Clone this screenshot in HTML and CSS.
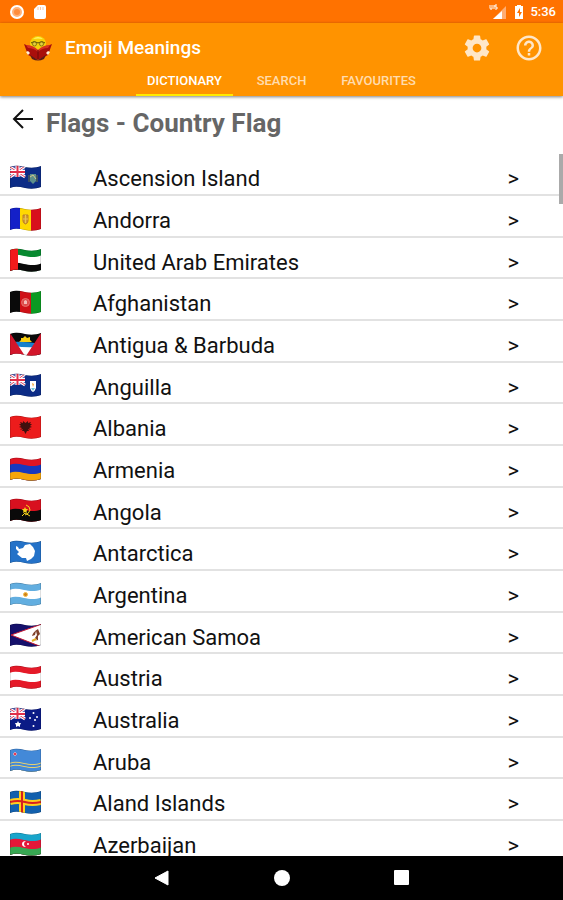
FILE: index.html
```html
<!DOCTYPE html>
<html lang="en">
<head>
<meta charset="utf-8">
<meta name="viewport" content="width=device-width, initial-scale=1">
<title>Emoji Meanings</title>
<link rel="stylesheet" href="styles.css">
</head>
<body>
<svg class="defs" aria-hidden="true">
  <defs>
    <path id="wave" d="M-1 2C4 0 9 1 14 2S26 4 32 1V40H-1Z"/>
    <clipPath id="cloth"><path d="M0 2C5 0 10 1 15 2S26 3 31 1V22C26 24 20 24 15 23S5 21 0 23Z"/></clipPath>
    <g id="jack">
      <path d="M0 1H15V12H0Z" fill="#5a5fae"/>
      <path d="M0 2L15 12M15 1L0 12" stroke="#fff" stroke-width="3"/>
      <path d="M0 2L15 12M15 1L0 12" stroke="#e0405a" stroke-width="1"/>
      <path d="M7.500 0V12M0 7H15" stroke="#fff" stroke-width="4"/>
      <path d="M7.500 0V12M0 7H15" stroke="#e0304a" stroke-width="2"/>
    </g>
    <path id="fold" d="M0 2C5 0 10 1 15 2S26 3 31 1V22C26 24 20 24 15 23S5 21 0 23Z" fill="none" stroke="#000" stroke-opacity=".25"/>
  </defs>
</svg>
<div class="app">
  <div class="status">
    <svg class="status-left" viewBox="0 0 40 16" aria-hidden="true">
      <circle cx="8" cy="8" r="6" fill="#ffb27a" stroke="#fff" stroke-width="2"/>
      <circle cx="8" cy="8" r="3" fill="#ff8d3c"/>
      <path d="M29 1H35Q37 1 37 3V13Q37 15 35 15H27Q25 15 25 13V5Z" fill="#fff"/>
      <path d="M29 3V6M31.500 3V6M34 3V6" stroke="#ffc79e"/>
    </svg>
    <div class="status-right">
      <svg class="signal" viewBox="0 0 18 16" aria-hidden="true">
        <path d="M17 2V15H4Z" fill="#ffad73"/>
        <path d="M13 7V15H4Z" fill="#fff"/>
        <path d="M1 1V4Q1 6 3 5V1M5 1V5M8 1H6V3H8V5H6" fill="none" stroke="#fff"/>
      </svg>
      <svg class="battery" viewBox="0 0 10 16" aria-hidden="true">
        <path d="M3 1H7V2H9V15H1V2H3Z" fill="#fff"/>
        <path d="M6 4L3 9H5V13L8 8H6Z" fill="#ff7200"/>
      </svg>
      <span class="time">5:36</span>
    </div>
  </div>
  <header class="appbar">
    <div class="toolbar">
      <svg class="logo" viewBox="0 0 30 26" aria-hidden="true">
        <circle cx="15" cy="9" r="8" fill="#f5d20a"/>
        <path d="M10 4Q15 0 20 4Q15 3 10 4Z" fill="#fff36b"/>
        <path d="M8 8Q11 5 15 8Q19 5 22 8" fill="none" stroke="#54480a"/>
        <circle cx="11.500" cy="9" r="2" fill="#e3cf3c" stroke="#8a780f"/>
        <circle cx="18.500" cy="9" r="2" fill="#e3cf3c" stroke="#8a780f"/>
        <path d="M1 9L15 15L29 9L25 20L15 25L5 20Z" fill="#a90f0c"/>
        <path d="M3 10Q10 10 15 15Q20 10 27 10L25 13Q19 13 15 17Q11 13 5 13Z" fill="#d8301f"/>
        <path d="M7 20L15 25L23 20L21 24Q15 27 9 24Z" fill="#5a1a18"/>
        <path d="M15 15V24" stroke="#6c0808"/>
        <path d="M3 17L5 16L7 18L5 20Z" fill="#fff0d8"/>
        <path d="M27 17L25 16L23 18L25 20Z" fill="#fff0d8"/>
      </svg>
      <h1 class="app-title">Emoji Meanings</h1>
      <div class="actions">
        <button class="icon-button" aria-label="Settings">
          <svg viewBox="0 0 24 24"><path fill="currentColor" d="M19.430 12.980c.04-.32.07-.64.07-.98s-.03-.66-.07-.98l2.110-1.650c.19-.15.24-.42.12-.64l-2-3.460c-.12-.22-.39-.3-.61-.22l-2.490 1c-.52-.4-1.080-.73-1.690-.98l-.38-2.650C14.460 2.180 14.250 2 14 2h-4c-.25 0-.46.18-.49.42l-.38 2.650c-.61.25-1.170.59-1.690.98l-2.490-1c-.23-.09-.49 0-.61.22l-2 3.460c-.13.22-.07.49.12.64l2.110 1.650c-.04.32-.07.65-.07.98s.03.66.07.98l-2.110 1.650c-.19.15-.24.42-.12.64l2 3.460c.12.22.39.3.61.22l2.490-1c.52.4 1.080.73 1.690.98l.38 2.650c.03.24.24.42.49.42h4c.25 0 .46-.18.49-.42l.38-2.650c.61-.25 1.170-.59 1.690-.98l2.490 1c.23.09.49 0 .61-.22l2-3.460c.12-.22.07-.49-.12-.64l-2.110-1.650zM12 15.500c-1.930 0-3.500-1.570-3.500-3.500s1.570-3.500 3.500-3.500 3.500 1.570 3.500 3.500-1.570 3.500-3.500 3.500z"/></svg>
        </button>
        <button class="icon-button" aria-label="Help">
          <svg viewBox="0 0 24 24"><path fill="currentColor" d="M11 18h2v-2h-2v2zm1-16C6.480 2 2 6.480 2 12s4.480 10 10 10 10-4.480 10-10S17.520 2 12 2zm0 18c-4.410 0-8-3.590-8-8s3.590-8 8-8 8 3.590 8 8-3.590 8-8 8zm0-14c-2.210 0-4 1.790-4 4h2c0-1.100.9-2 2-2s2 .9 2 2c0 2-3 1.750-3 5h2c0-2.250 3-2.500 3-5 0-2.210-1.790-4-4-4z"/></svg>
        </button>
      </div>
    </div>
    <nav class="tabs">
      <a class="tab active" href="#dictionary">DICTIONARY</a>
      <a class="tab" href="#search">SEARCH</a>
      <a class="tab" href="#favourites">FAVOURITES</a>
    </nav>
  </header>
  <main class="content">
    <div class="heading">
      <button class="back" aria-label="Back">
        <svg viewBox="0 0 22 22"><path d="M21 11H2M11 2L2 11L11 20" fill="none" stroke="#111" stroke-width="2"/></svg>
      </button>
      <h2 class="heading-title">Flags - Country Flag</h2>
    </div>
    <div class="list-area">
      <ul class="list">
        <li><a class="row" href="#ac"><svg class="flag" viewBox="0 0 31 25" aria-hidden="true"><g clip-path="url(#cloth)"><path fill="#0c2c86" d="M0 0H31V25H0Z"/><use href="#jack"/><path d="M20 9H26V16L23 19L20 16Z" fill="#5d8f8b"/><path d="M20 12L23 10L26 14" stroke="#d9c88a" fill="none"/><path d="M19 10V17M27 10V17" stroke="#6b7440"/><use href="#fold"/></g></svg><span class="name">Ascension Island</span><span class="go">&gt;</span></a></li>
        <li><a class="row" href="#ad"><svg class="flag" viewBox="0 0 31 25" aria-hidden="true"><g clip-path="url(#cloth)"><path fill="#1420c8" d="M0 0H10V25H0Z"/><path fill="#ffd800" d="M10 0H21V25H10Z"/><path fill="#d8101c" d="M21 0H31V25H21Z"/><path d="M13 8H18V14Q18 16 15.500 17Q13 16 13 14Z" fill="#d69a2d" stroke="#b97c2a"/><path d="M15.500 8V16M13 12H18" stroke="#e8c257"/><use href="#fold"/></g></svg><span class="name">Andorra</span><span class="go">&gt;</span></a></li>
        <li><a class="row" href="#ae"><svg class="flag" viewBox="0 0 31 25" aria-hidden="true"><g clip-path="url(#cloth)"><use href="#wave" y="-2" fill="#078930"/><use href="#wave" y="6" fill="#fff"/><use href="#wave" y="14" fill="#0a0a0a"/><path fill="#f21b1b" d="M0 0H8V25H0Z"/><use href="#fold"/></g></svg><span class="name">United Arab Emirates</span><span class="go">&gt;</span></a></li>
        <li><a class="row" href="#af"><svg class="flag" viewBox="0 0 31 25" aria-hidden="true"><g clip-path="url(#cloth)"><path fill="#0a0a0a" d="M0 0H10V25H0Z"/><path fill="#cf1016" d="M10 0H21V25H10Z"/><path fill="#0b9a22" d="M21 0H31V25H21Z"/><circle cx="15.500" cy="12.500" r="4" fill="#dd4c4b" stroke="#e8706b"/><path d="M14 14V11L15.500 10L17 11V14Z" fill="#f5bcb8"/><use href="#fold"/></g></svg><span class="name">Afghanistan</span><span class="go">&gt;</span></a></li>
        <li><a class="row" href="#ag"><svg class="flag" viewBox="0 0 31 25" aria-hidden="true"><g clip-path="url(#cloth)"><path fill="#0a0a0a" d="M0 0H31V25H0Z"/><path d="M9 10L11 8L11 6L13 6L15 4L17 6L20 5L20 8L22 10Z" fill="#f9cf12"/><path fill="#1681cd" d="M0 10Q15 9 31 12V17H0Z"/><path fill="#fff" d="M4 14Q15 16 28 15V25H4Z"/><path fill="#d3162b" d="M0 1L15 24H0ZM31 1L16 24H31Z"/><use href="#fold"/></g></svg><span class="name">Antigua &amp; Barbuda</span><span class="go">&gt;</span></a></li>
        <li><a class="row" href="#ai"><svg class="flag" viewBox="0 0 31 25" aria-hidden="true"><g clip-path="url(#cloth)"><path fill="#0c2c86" d="M0 0H31V25H0Z"/><use href="#jack"/><path d="M20 8H26V15Q25 18 23 19Q21 18 20 15Z" fill="#fff"/><path d="M22 10L24 11L23 14Z" fill="#f0a032"/><path d="M21 15H25L23 18Z" fill="#6ec4dc"/><use href="#fold"/></g></svg><span class="name">Anguilla</span><span class="go">&gt;</span></a></li>
        <li><a class="row" href="#al"><svg class="flag" viewBox="0 0 31 25" aria-hidden="true"><g clip-path="url(#cloth)"><path fill="#ec1c1c" d="M0 0H31V25H0Z"/><path d="M15.500 8L13 6L13 8L10 7L11 9L9 9L11 11L9 12L12 13L10 15L13 14L12 16L14 16L15.500 19L17 16L19 16L18 14L21 15L19 13L22 12L20 11L22 9L20 9L21 7L18 8L18 6Z" fill="#40100e"/><use href="#fold"/></g></svg><span class="name">Albania</span><span class="go">&gt;</span></a></li>
        <li><a class="row" href="#am"><svg class="flag" viewBox="0 0 31 25" aria-hidden="true"><g clip-path="url(#cloth)"><use href="#wave" y="-2" fill="#e01523"/><use href="#wave" y="6" fill="#1738bd"/><use href="#wave" y="14" fill="#f5a50a"/><use href="#fold"/></g></svg><span class="name">Armenia</span><span class="go">&gt;</span></a></li>
        <li><a class="row" href="#ao"><svg class="flag" viewBox="0 0 31 25" aria-hidden="true"><g clip-path="url(#cloth)"><use href="#wave" y="-2" fill="#d8101f"/><use href="#wave" y="10" fill="#0a0a0a"/><path d="M16 7Q20 8 20 12Q19 16 15 17M12 18L15 15L20 18" fill="none" stroke="#f7d21a" stroke-width="1"/><path d="M15 9L16 11L18 11L16.500 13L17 15L15 14L13 15L13.500 13L12 11L14 11Z" fill="#f7d21a"/><use href="#fold"/></g></svg><span class="name">Angola</span><span class="go">&gt;</span></a></li>
        <li><a class="row" href="#aq"><svg class="flag" viewBox="0 0 31 25" aria-hidden="true"><g clip-path="url(#cloth)"><path fill="#2472c8" d="M0 0H31V25H0Z"/><path d="M6 6L8 7L9 9L13 8L15 5L20 4L23 7L25 11L24 16L21 19L17 21L16 18L12 18L7 14L9 12L6 9Z" fill="#fff"/><use href="#fold"/></g></svg><span class="name">Antarctica</span><span class="go">&gt;</span></a></li>
        <li><a class="row" href="#ar"><svg class="flag" viewBox="0 0 31 25" aria-hidden="true"><g clip-path="url(#cloth)"><use href="#wave" y="-2" fill="#62aee0"/><use href="#wave" y="6" fill="#fff"/><use href="#wave" y="14" fill="#62aee0"/><circle cx="15.500" cy="12.500" r="2" fill="#cf811b" stroke="#f4bd45"/><use href="#fold"/></g></svg><span class="name">Argentina</span><span class="go">&gt;</span></a></li>
        <li><a class="row" href="#as"><svg class="flag" viewBox="0 0 31 25" aria-hidden="true"><g clip-path="url(#cloth)"><path fill="#15106b" d="M0 0H31V25H0Z"/><path d="M1 12L32 1V24Z" fill="#fff" stroke="#c31933" stroke-width="1"/><path d="M28 6Q23 9 22 13L25 12L26 8L27 12L25 15L27 17L24 18L28 17L28 13L30 11Z" fill="#80422b"/><path d="M22 18L26 16" stroke="#e3ad24" stroke-width="2"/><use href="#fold"/></g></svg><span class="name">American Samoa</span><span class="go">&gt;</span></a></li>
        <li><a class="row" href="#at"><svg class="flag" viewBox="0 0 31 25" aria-hidden="true"><g clip-path="url(#cloth)"><use href="#wave" y="-2" fill="#e51a29"/><use href="#wave" y="6" fill="#fff"/><use href="#wave" y="14" fill="#e51a29"/><use href="#fold"/></g></svg><span class="name">Austria</span><span class="go">&gt;</span></a></li>
        <li><a class="row" href="#au"><svg class="flag" viewBox="0 0 31 25" aria-hidden="true"><g clip-path="url(#cloth)"><path fill="#0b1b86" d="M0 0H31V25H0Z"/><use href="#jack"/><path d="M8 14L9 16L11 16L10 18L10 20L8 19L6 20L6 18L5 16L7 16Z" fill="#fff"/><g fill="#fff"><circle cx="23.500" cy="6" r="1"/><circle cx="20" cy="11" r="1"/><circle cx="27" cy="10" r="1"/><circle cx="25" cy="13" r="1"/><circle cx="23.500" cy="19" r="1"/></g><use href="#fold"/></g></svg><span class="name">Australia</span><span class="go">&gt;</span></a></li>
        <li><a class="row" href="#aw"><svg class="flag" viewBox="0 0 31 25" aria-hidden="true"><g clip-path="url(#cloth)"><use href="#wave" y="-2" fill="#4389d8"/><use href="#wave" y="13" fill="#e6d070"/><use href="#wave" y="14" fill="#4389d8"/><use href="#wave" y="16" fill="#e6d070"/><use href="#wave" y="17" fill="#4389d8"/><path d="M5 4L6 5L7 6L6 7L5 8L4 7L3 6L4 5Z" fill="#e43c55" stroke="#fff" stroke-opacity=".4"/><use href="#fold"/></g></svg><span class="name">Aruba</span><span class="go">&gt;</span></a></li>
        <li><a class="row" href="#ax"><svg class="flag" viewBox="0 0 31 25" aria-hidden="true"><g clip-path="url(#cloth)"><path fill="#1260ad" d="M0 0H31V25H0Z"/><path d="M12 0V25M0 12Q8 10 15 12T31 12" fill="none" stroke="#ffcf1d" stroke-width="6"/><path d="M12 0V25M0 12Q8 10 15 12T31 12" fill="none" stroke="#d8201f" stroke-width="2"/><use href="#fold"/></g></svg><span class="name">Aland Islands</span><span class="go">&gt;</span></a></li>
        <li><a class="row" href="#az"><svg class="flag" viewBox="0 0 31 25" aria-hidden="true"><g clip-path="url(#cloth)"><use href="#wave" y="-2" fill="#18a5cb"/><use href="#wave" y="6" fill="#e51738"/><use href="#wave" y="14" fill="#38a853"/><path d="M16 9Q12 9 12 12T16 15Q14 14 14 12T16 9Z" fill="#fff"/><circle cx="18" cy="12" r="1" fill="#fff"/><use href="#fold"/></g></svg><span class="name">Azerbaijan</span><span class="go">&gt;</span></a></li>
      </ul>
      <div class="scroll-thumb"></div>
    </div>
  </main>
  <footer class="system-nav">
    <button class="nav-button" aria-label="System back"><svg viewBox="0 0 16 16"><path d="M14 1V15L1 8Z" fill="#fff" stroke="#fff" stroke-linejoin="round"/></svg></button>
    <button class="nav-button" aria-label="Home"><svg viewBox="0 0 16 16"><circle cx="8" cy="8" r="8" fill="#fff"/></svg></button>
    <button class="nav-button" aria-label="Recent apps"><svg viewBox="0 0 16 16"><rect width="15" height="15" rx="1" fill="#fff"/></svg></button>
  </footer>
</div>
</body>
</html>
```
FILE: styles.css
```css
* {
  box-sizing: border-box;
}

body {
  margin: 0;
  font-family: Roboto, "Liberation Sans", sans-serif;
  color: #111;
  background: #fff;
}

button {
  padding: 0;
  border: 0;
  background: none;
  color: inherit;
  font: inherit;
}

button svg {
  display: block;
  width: 100%;
}

a {
  color: inherit;
  text-decoration: none;
}

.defs {
  position: absolute;
  width: 0;
  height: 0;
}

.app {
  display: flex;
  flex-direction: column;
  height: 100vh;
}

.status {
  display: flex;
  flex: none;
  align-items: center;
  justify-content: space-between;
  height: 23px;
  padding: 1px 7px 0 9px;
  background: #ff7200;
  color: #fff;
}

.status-left {
  width: 40px;
  height: 16px;
}

.status-right {
  display: flex;
  align-items: center;
}

.signal {
  width: 18px;
  height: 16px;
  margin-right: 7px;
}

.battery {
  width: 10px;
  height: 16px;
  margin-right: 6px;
}

.time {
  font-size: 13px;
  font-weight: 500;
  line-height: 16px;
}

.appbar {
  position: relative;
  flex: none;
  background: #ff9300;
  color: #fff;
  box-shadow: 0 1px 3px rgba(0, 0, 0, 0.5);
}

.toolbar {
  display: flex;
  align-items: center;
  height: 49px;
  padding: 0 19px 0 23px;
}

.logo {
  width: 30px;
  height: 26px;
  margin-right: 12px;
}

.app-title {
  margin: 0;
  font-size: 19px;
  font-weight: 500;
  line-height: 24px;
}

.actions {
  display: flex;
  gap: 22px;
  margin-left: auto;
}

.icon-button {
  width: 30px;
  height: 30px;
  color: #ffe7c8;
}

.tabs {
  display: flex;
  justify-content: center;
}

.tab {
  width: 97px;
  border-bottom: 2px solid transparent;
  color: #ffdcae;
  font-size: 13px;
  font-weight: 500;
  line-height: 18px;
  padding-bottom: 4px;
  text-align: center;
}

.tab.active {
  border-color: #ffea00;
  color: #fff;
}

.content {
  display: flex;
  flex: 1;
  flex-direction: column;
  min-height: 0;
}

.heading {
  display: flex;
  flex: none;
  align-items: flex-start;
  gap: 12px;
  height: 58px;
  padding: 12px 12px 0;
}

.back {
  width: 22px;
  height: 22px;
}

.heading-title {
  margin: 0;
  color: #666;
  font-size: 26px;
  font-weight: 700;
  line-height: 30px;
}

.list-area {
  position: relative;
  flex: 1;
  min-height: 0;
  overflow: hidden;
}

.list {
  display: grid;
  grid-auto-rows: 42px 42px 41px;
  margin: 0;
  padding: 0;
  list-style: none;
}

.row {
  display: flex;
  align-items: center;
  height: 100%;
  padding: 6px 44px 0 10px;
  border-bottom: 2px solid #e2e2e2;
}

.flag {
  flex: none;
  width: 31px;
  height: 25px;
  margin-right: 52px;
}

.name,
.go {
  padding-top: 4px;
  font-size: 22px;
  line-height: 28px;
}

.name {
  flex: 1;
}

.scroll-thumb {
  position: absolute;
  top: 0;
  right: 0;
  width: 4px;
  height: 50px;
  background: #aaa;
}

.system-nav {
  display: flex;
  flex: none;
  align-items: center;
  justify-content: center;
  gap: 104px;
  height: 44px;
  background: #000;
}

.nav-button {
  width: 16px;
  height: 16px;
}
```
